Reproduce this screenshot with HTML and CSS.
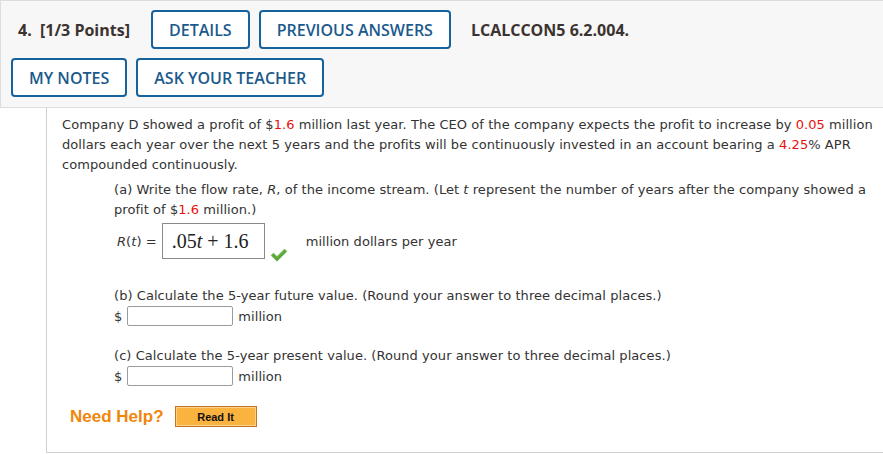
FILE: index.html
```html
<!DOCTYPE html>
<html>
<head>
<meta charset="utf-8">
<link rel="stylesheet" href="styles.css">
</head>
<body>
<div class="page">
  <div class="qhead">
    <div class="qrow">
      <span class="qnum">4.&nbsp; [1/3 Points]</span>
      <button class="qbtn">DETAILS</button>
      <button class="qbtn">PREVIOUS ANSWERS</button>
      <span class="qcode">LCALCCON5 6.2.004.</span>
    </div>
    <div class="qrow">
      <button class="qbtn">MY NOTES</button>
      <button class="qbtn">ASK YOUR TEACHER</button>
    </div>
  </div>
  <div class="qbody">
    <p class="stem">Company D showed a profit of $<span class="red">1.6</span> million last year. The CEO of the company expects the profit to increase by <span class="red">0.05</span> million dollars each year over the next 5 years and the profits will be continuously invested in an account bearing a <span class="red">4.25</span>% APR compounded continuously.</p>
    <div class="part">
      <p class="ptext">(a) Write the flow rate, <i>R</i>, of the income stream. (Let <i>t</i> represent the number of years after the company showed a profit of $<span class="red">1.6</span> million.)</p>
      <div class="ansrow">
        <span class="rlabel"><i>R</i>(<i>t</i>) =</span>
        <span class="mathbox"><span class="math">.05<i>t</i> + 1.6</span></span>
        <svg class="check" width="18" height="14" viewBox="0 0 18 14"><path d="M1 7.5 L3.5 5 L7 8.5 L14.5 1 L17 3.5 L7 13.5 Z" fill="#5fa83a"/><path d="M1 7.5 L3.5 5 L7 8.5 L14.5 1 L17 3.5" fill="none" stroke="#88c865" stroke-width="0.8"/></svg>
        <span class="unit">million dollars per year</span>
      </div>
      <p class="ptext pb">(b) Calculate the 5-year future value. (Round your answer to three decimal places.)</p>
      <div class="inrow"><span>$</span><span class="inbox"></span><span>million</span></div>
      <p class="ptext pb">(c) Calculate the 5-year present value. (Round your answer to three decimal places.)</p>
      <div class="inrow"><span>$</span><span class="inbox"></span><span>million</span></div>
    </div>
    <div class="help">
      <span class="needhelp">Need Help?</span>
      <span class="readit">Read It</span>
    </div>
  </div>
</div>
</body>
</html>
```
FILE: styles.css
```css
html, body { margin: 0; padding: 0; background: #fff; }
.page { width: 883px; height: 454px; overflow: hidden; position: relative; }
.qhead {
  background: #f7f7f7;
  border-top: 1px solid #dcdcdc;
  border-left: 1px solid #dcdcdc;
  border-bottom: 1px solid #dcdcdc;
  padding: 9px 0 0 10px;
  height: 97px;
  box-sizing: content-box;
  font-family: "Open Sans", sans-serif;
}
.qrow { display: flex; align-items: center; gap: 9px; margin-bottom: 9px; }
.qnum { font-weight: 700; font-size: 16px; color: #3b3330; margin-left: 7px; margin-right: 12px; width: 112px; white-space: nowrap; }
.qbtn {
  font-family: "Open Sans", sans-serif;
  font-weight: 600;
  font-size: 16px;
  color: #1c5a8c;
  background: #fff;
  border: 2px solid #16629c;
  border-radius: 4px;
  height: 39px;
  padding: 0 16px;
  margin: 0;
  letter-spacing: 0;
}
.qcode { font-weight: 700; font-size: 16px; color: #3b3330; margin-left: 11px; }
.qbody {
  margin-left: 46px;
  border-left: 1px solid #cfcfcf;
  border-bottom: 1px solid #cfcfcf;
  height: 337px;
  padding: 7px 0 0 15px;
  font-family: "DejaVu Sans", Verdana, sans-serif;
  font-size: 13px;
  letter-spacing: 0.06px;
  color: #333;
}
p { margin: 0; }
.stem { line-height: 20px; width: 812px; }
.red { color: #e8100e; }
.part { margin-left: 52px; margin-top: 5px; }
.ptext { line-height: 20px; width: 762px; }
.ansrow { display: flex; align-items: center; height: 36px; margin-top: 3px; }
.rlabel { margin-left: 3px; margin-right: 5px; }
.mathbox {
  width: 101px; height: 34px; border: 1px solid #8a8a8a;
  display: flex; align-items: center; box-sizing: content-box;
}
.math { font-family: "Liberation Serif", "DejaVu Serif", serif; font-size: 20px; margin-left: 9px; color: #222; letter-spacing: 0; }
.check { align-self: flex-end; margin: 0 0 -3px 5px; }
.unit { margin-left: 18px; }
.pb { margin-top: 27px; }
.inrow { display: flex; align-items: center; height: 20px; gap: 5px; }
.inrow + .ptext { margin-top: 20px; }
.inbox { width: 104px; height: 18px; border: 1px solid #9c9c9c; border-radius: 2px; background: #fff; }
.help { display: flex; align-items: center; margin-top: 20px; margin-left: 8px; }
.needhelp { font-family: "Liberation Sans", Arial, sans-serif; font-weight: 700; font-size: 17px; color: #f0860c; letter-spacing: 0; }
.readit {
  margin-left: 11px;
  font-family: "Liberation Sans", Arial, sans-serif; font-weight: 700; font-size: 11px; color: #111; letter-spacing: 0;
  width: 80px; height: 19px; border: 1px solid #c0742a;
  background: #fbb33f; box-shadow: inset 0 0 0 1px #fdd487;
  display: flex; align-items: center; justify-content: center;
}
```
